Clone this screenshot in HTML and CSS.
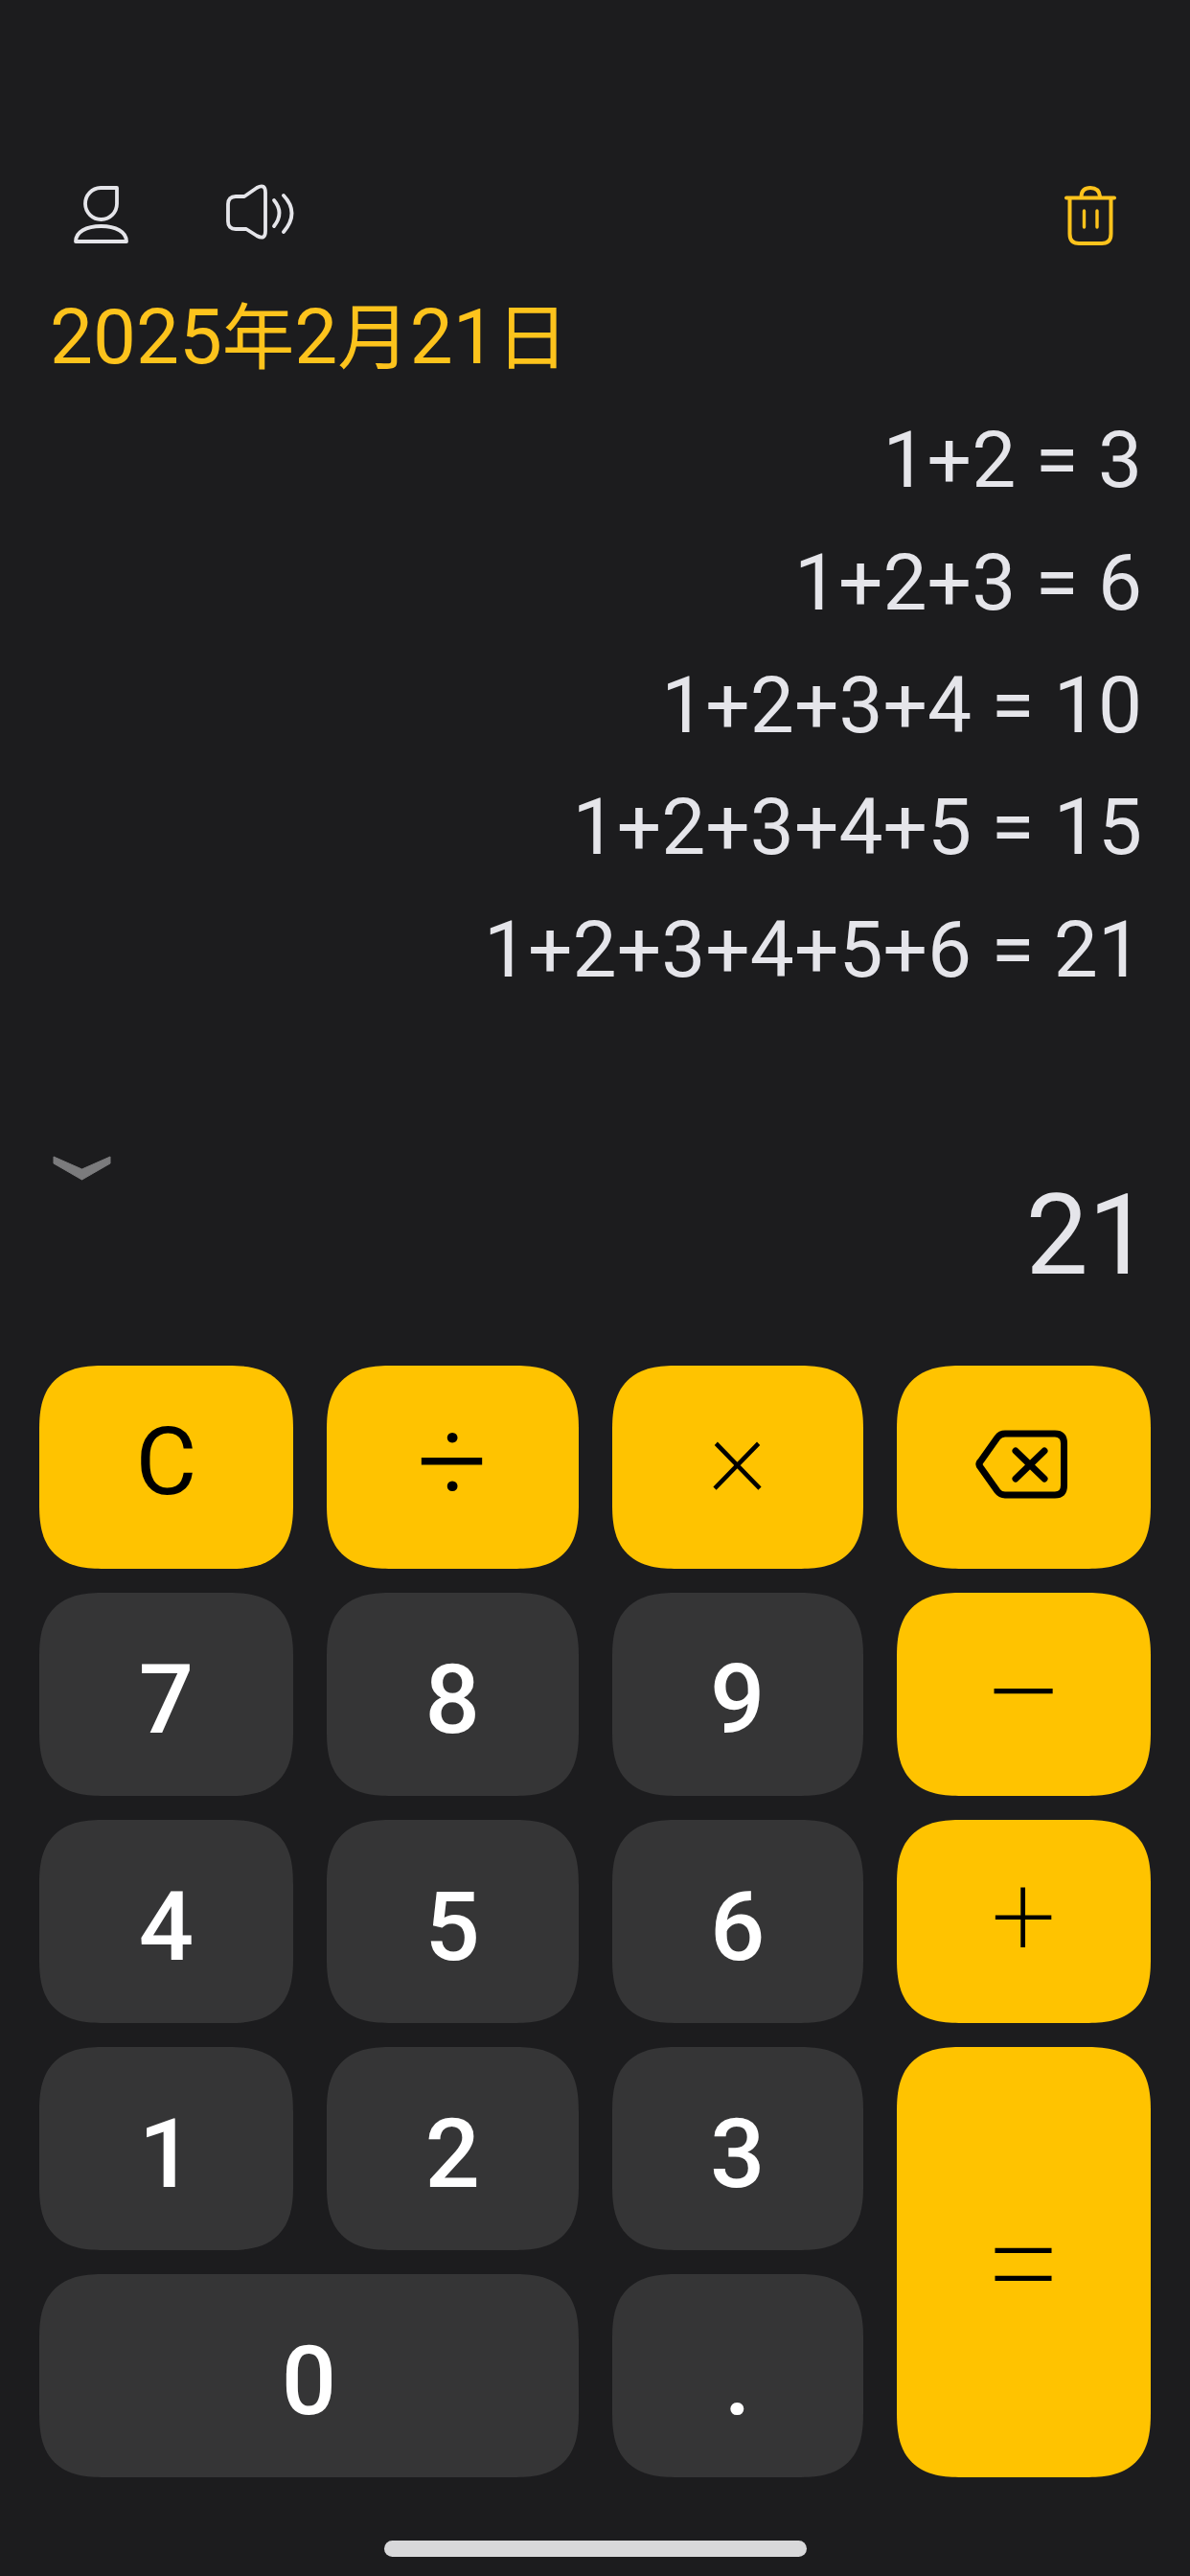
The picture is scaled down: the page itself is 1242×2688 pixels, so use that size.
FILE: index.html
```html
<!DOCTYPE html>
<html lang="zh-CN">
<head>
    <meta charset="UTF-8">
    <meta name="viewport" content="width=device-width, initial-scale=1.0">
    <title>计算器</title>
    <link rel="stylesheet" href="styles.css">
</head>
<body>
    <div class="app">
        <div class="toolbar">
            <svg class="tool-icon" viewBox="0 0 90 90" fill="none" stroke="#e5e5ea" stroke-width="3.8" stroke-linejoin="round">
                <path d="M62 16H45A16.5 16.5 0 1 0 62 32.500Z"/>
                <path d="M19 72C19 62 30 56 45.500 56C61 56 72 62 72 72Z"/>
            </svg>
            <svg class="tool-icon sound" viewBox="0 0 90 90" fill="none" stroke="#e5e5ea" stroke-width="3.8" stroke-linecap="round" stroke-linejoin="round">
                <path d="M21 25H30L43 16Q52 11 52 21V61Q52 71 43 66L32 59H21Q13 59 13 51V33Q13 25 21 25Z"/>
                <path d="M61 29Q72 42 61 56"/>
                <path d="M71 24Q88 42 71 62"/>
            </svg>
            <svg class="tool-icon trash" viewBox="0 0 90 90" fill="none" stroke="#fdc31c" stroke-width="4" stroke-linecap="round" stroke-linejoin="round">
                <path d="M21 26.500H71"/>
                <path d="M36.500 25Q37 16 46 16Q55 16 56 25"/>
                <path d="M24.500 27V64Q24.500 74 34 74H58Q67.500 74 67.500 64V27"/>
                <path d="M39.500 40V57M53 40V57" stroke-width="3.400"/>
            </svg>
        </div>

        <div class="date">2025<span class="cjk">年</span>2<span class="cjk">月</span>21<span class="cjk">日</span></div>

        <div class="history">
            <div class="history-line">1+2 = 3</div>
            <div class="history-line">1+2+3 = 6</div>
            <div class="history-line">1+2+3+4 = 10</div>
            <div class="history-line">1+2+3+4+5 = 15</div>
            <div class="history-line">1+2+3+4+5+6 = 21</div>
        </div>

        <div class="display">
            <svg class="collapse" viewBox="0 0 61 26" fill="#7b7b7d" stroke="#7b7b7d" stroke-width="1" stroke-linejoin="round">
                <path d="M1 1L30.500 14L60 1V8L30.500 25L1 8Z"/>
            </svg>
            <div class="result">21</div>
        </div>

        <div class="keypad">
            <button class="key op clear">C</button>
            <button class="key op divide">÷</button>
            <button class="key op times">×</button>
            <button class="key op">
                <svg class="backspace" viewBox="0 0 120 100" fill="none" stroke="#000" stroke-width="7" stroke-linecap="round" stroke-linejoin="round">
                    <path d="M41 15H93Q102.500 15 102.500 25V69Q102.500 79 93 79H41Q36 79 33 75L16 51Q12 47 16 43L33 19Q36 15 41 15Z"/>
                    <path d="M52 33L82 62M82 33L52 62"/>
                </svg>
            </button>
            <button class="key">7</button>
            <button class="key">8</button>
            <button class="key">9</button>
            <button class="key op minus">−</button>
            <button class="key">4</button>
            <button class="key">5</button>
            <button class="key">6</button>
            <button class="key op plus">+</button>
            <button class="key">1</button>
            <button class="key">2</button>
            <button class="key">3</button>
            <button class="key op equals">=</button>
            <button class="key zero">0</button>
            <button class="key">.</button>
        </div>

        <div class="home-bar"></div>
    </div>
</body>
</html>
```

FILE: styles.css
```css
html, body {
    margin: 0;
    padding: 0;
    background: #1c1c1e;
}
.app {
    width: 1242px;
    height: 2688px;
    overflow: hidden;
    font-family: Roboto, "Noto Sans CJK SC", sans-serif;
    color: #e5e5ea;
}
.toolbar {
    display: flex;
    gap: 75px;
    height: 90px;
    padding: 180px 60px 0;
}
.tool-icon {
    width: 90px;
    height: 90px;
}
.trash {
    margin-left: auto;
}
.date {
    margin-top: 32px;
    padding-left: 52px;
    font-size: 80px;
    line-height: 100px;
    color: #fdc31c;
}
.cjk {
    font-size: 75.500px;
}
.history {
    margin-top: 14px;
    padding-right: 50px;
    text-align: right;
    font-size: 82px;
}
.history-line {
    height: 127.750px;
    line-height: 127.750px;
}
.display {
    display: flex;
    justify-content: space-between;
    margin-top: 143px;
    padding: 0 41px 0 55px;
}
.collapse {
    width: 61px;
    height: 26px;
    margin-top: 7px;
}
.result {
    margin-top: 20px;
    font-size: 116px;
    line-height: 140px;
}
.keypad {
    display: grid;
    grid-template-columns: 265px 263.500px 262.500px 265.500px;
    grid-auto-rows: 212px;
    gap: 25px 34.500px;
    margin-top: 66px;
    padding-left: 41px;
}
.key {
    display: flex;
    align-items: center;
    justify-content: center;
    padding: 12px 0 0;
    border: 0;
    border-radius: 56px;
    background: #353536;
    color: #fff;
    font-family: Roboto, sans-serif;
    font-size: 101px;
    font-weight: 500;
}
/* rounder corners where the browser has squircles */
@supports (corner-shape: squircle) {
    .key {
        border-radius: 68px;
        corner-shape: superellipse(1.4);
    }
}
.op {
    padding: 0;
    background: #ffc300;
    color: #000;
    font-size: 120px;
    font-weight: 200;
}
.clear {
    padding-bottom: 10px;
    font-size: 98px;
    font-weight: 400;
}
.divide {
    padding-bottom: 12px;
    font-size: 130px;
    font-weight: 300;
}
.times {
    padding-bottom: 30px;
}
.minus {
    font-size: 150px;
}
.plus {
    padding-bottom: 10px;
}
.zero {
    grid-column: span 2;
}
.equals {
    grid-row: 4 / span 2;
    grid-column: 4;
    font-size: 145px;
}
.backspace {
    width: 120px;
    height: 100px;
}
.home-bar {
    width: 441px;
    height: 17px;
    margin: 66px 0 0 401px;
    border-radius: 9px;
    background: #d8d8da;
}
```
